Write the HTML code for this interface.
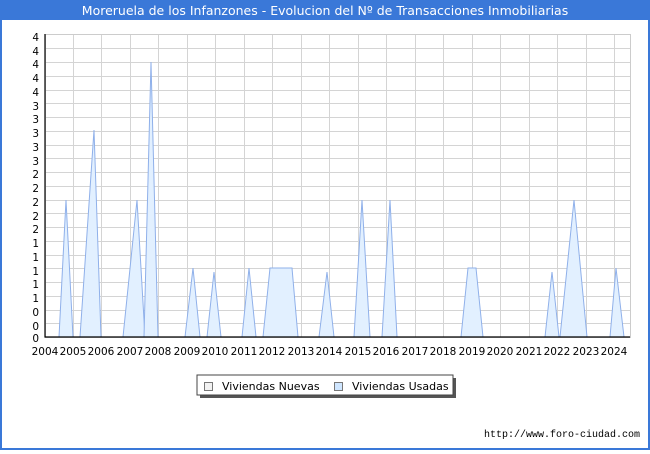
<!DOCTYPE html>
<html><head><meta charset="utf-8"><style>
body{margin:0;width:650px;height:450px;overflow:hidden;background:#fff;font-family:"DejaVu Sans","Liberation Sans",sans-serif}
</style></head><body>
<svg width="650" height="450" xmlns="http://www.w3.org/2000/svg" font-family="DejaVu Sans, Liberation Sans, sans-serif">
<rect x="0" y="0" width="650" height="450" fill="#fff"/>
<rect x="0" y="0" width="650" height="20" fill="#3a78d8"/>
<rect x="0" y="0" width="2" height="450" fill="#3a78d8"/>
<rect x="648" y="0" width="2" height="450" fill="#3a78d8"/>
<rect x="0" y="448" width="650" height="2" fill="#3a78d8"/>
<text x="325" y="15" text-anchor="middle" fill="#fff" font-size="12.5">Moreruela de los Infanzones - Evolucion del Nº de Transacciones Inmobiliarias</text>
<g stroke="#d4d4d4" stroke-width="1">
<path d="M45 48.5H630M45 62.5H630M45 76.5H630M45 90.5H630M45 103.5H630M45 117.5H630M45 131.5H630M45 145.5H630M45 158.5H630M45 172.5H630M45 186.5H630M45 200.5H630M45 213.5H630M45 227.5H630M45 241.5H630M45 255.5H630M45 268.5H630M45 282.5H630M45 296.5H630M45 310.5H630M45 323.5H630"/>
<path d="M73.5 35V337M101.5 35V337M130.5 35V337M158.5 35V337M187.5 35V337M215.5 35V337M244.5 35V337M272.5 35V337M301.5 35V337M329.5 35V337M358.5 35V337M386.5 35V337M415.5 35V337M443.5 35V337M472.5 35V337M500.5 35V337M529.5 35V337M557.5 35V337M586.5 35V337M614.5 35V337"/>
</g>
<rect x="45.5" y="34.5" width="585" height="303" fill="none" stroke="#ccc"/>
<g fill="#e2f0ff" stroke="#8fb0ea" stroke-width="1">
<polygon points="59,337 66,200 73,337"/>
<polygon points="80,337 94,130 101,337"/>
<polygon points="123,337 137,200 145,337"/>
<polygon points="144,337 151,62 158,337"/>
<polygon points="185,337 193,268 200,337"/>
<polygon points="207,337 214,272 221,337"/>
<polygon points="242,337 249,268 256,337"/>
<polygon points="263,337 270,268 292,268 298,337"/>
<polygon points="319,337 327,272 334,337"/>
<polygon points="354,337 362,200 370,337"/>
<polygon points="382,337 390,200 397,337"/>
<polygon points="461,337 468,268 476,268 483,337"/>
<polygon points="545,337 552,272 559,337"/>
<polygon points="560,337 574,200 587,337"/>
<polygon points="610,337 616,268 624,337"/>
</g>
<path d="M45 34V337H630" fill="none" stroke="#000" stroke-width="1.2"/>
<g font-size="10.5" fill="#000" text-anchor="end">
<text x="39" y="41">4</text><text x="39" y="55">4</text><text x="39" y="68">4</text><text x="39" y="82">4</text><text x="39" y="96">4</text><text x="39" y="110">3</text><text x="39" y="123">3</text><text x="39" y="137">3</text><text x="39" y="151">3</text><text x="39" y="165">3</text><text x="39" y="178">2</text><text x="39" y="192">2</text><text x="39" y="206">2</text><text x="39" y="220">2</text><text x="39" y="233">2</text><text x="39" y="247">1</text><text x="39" y="261">1</text><text x="39" y="275">1</text><text x="39" y="288">1</text><text x="39" y="302">1</text><text x="39" y="316">0</text><text x="39" y="330">0</text><text x="39" y="342">0</text>
</g>
<g font-size="10.5" fill="#000" text-anchor="middle">
<text x="45" y="355">2004</text><text x="73" y="355">2005</text><text x="101" y="355">2006</text><text x="130" y="355">2007</text><text x="158" y="355">2008</text><text x="187" y="355">2009</text><text x="215" y="355">2010</text><text x="244" y="355">2011</text><text x="272" y="355">2012</text><text x="301" y="355">2013</text><text x="329" y="355">2014</text><text x="358" y="355">2015</text><text x="386" y="355">2016</text><text x="415" y="355">2017</text><text x="443" y="355">2018</text><text x="472" y="355">2019</text><text x="500" y="355">2020</text><text x="529" y="355">2021</text><text x="557" y="355">2022</text><text x="586" y="355">2023</text><text x="614" y="355">2024</text>
</g>
<rect x="200" y="378" width="256" height="20" fill="#555"/>
<rect x="197" y="375" width="256" height="20" fill="#fff" stroke="#444"/>
<rect x="204.5" y="382.5" width="8" height="8" fill="#f2f2f2" stroke="#777"/>
<text x="222" y="390" font-size="11">Viviendas Nuevas</text>
<rect x="334.5" y="382.5" width="8" height="8" fill="#cfe6ff" stroke="#777"/>
<text x="352" y="390" font-size="11">Viviendas Usadas</text>
<text x="640" y="437" font-size="10" text-anchor="end" font-family="Liberation Mono, monospace">http://www.foro-ciudad.com</text>
</svg>
</body></html>
